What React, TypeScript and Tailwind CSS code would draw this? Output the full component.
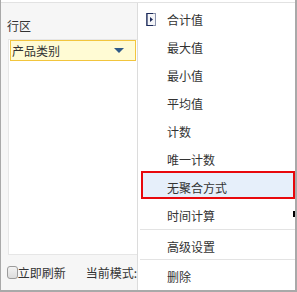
import React from "react";

const items = ["合计值", "最大值", "最小值", "平均值", "计数", "唯一计数", "无聚合方式", "时间计算"];

function Item({ label, active, children }: { label: string; active?: boolean; children?: React.ReactNode }) {
  return (
    <div
      className={
        "relative ml-[3px] h-[28px] flex items-center pt-[6px] pl-[24px] border-2 " +
        (active ? "border-[#e8080c] bg-[#e6effa]" : "border-transparent")
      }
    >
      {children}
      <span className="text-[12px] leading-[16px] text-[#333]">{label}</span>
    </div>
  );
}

export default function App() {
  return (
    <div
      className="w-[297px] h-[292px] flex flex-col border-l border-r-2 border-b-2 border-[#a9a9a9] bg-white overflow-hidden"
      style={{ fontFamily: '"Noto Sans CJK SC", "Noto Sans", sans-serif' }}
    >
      <div className="h-[3px] shrink-0 bg-white border-b border-[#e2e2e2]" />
      <div className="flex flex-1 min-h-0">
        {/* left panel */}
        <div className="w-[136px] shrink-0 bg-[#f6f6f6] overflow-hidden flex flex-col">
          <div className="mt-[15px] pl-[6px] text-[12px] leading-[16px] text-[#333]">行区</div>
          <div className="mt-[5px] ml-[7px] w-[140px] h-[216px] bg-white border border-[#e6e6e6]">
            <div className="ml-[1px] w-[126px] h-[21px] bg-[#fffbd4] border border-[#f2c53d] flex items-center justify-between">
              <span className="pl-[1px] text-[12px] leading-[16px] text-[#333]">产品类别</span>
              <svg width="10" height="5" viewBox="0 0 10 5" className="mr-[11px]">
                <polygon points="0,0 10,0 5,5" fill="#2f5a88" />
              </svg>
            </div>
          </div>
          <div className="mt-[9px] h-[17px] pl-[6px] flex items-center whitespace-nowrap">
            <div className="w-[13px] h-[13px] rounded-[3px] border border-[#9b9b9b] bg-gradient-to-b from-[#f3f3f3] to-[#dcdcdc]" />
            <span className="text-[12px] leading-[16px] text-[#333]">立即刷新</span>
            <span className="ml-[20px] text-[12px] leading-[16px] text-[#333]">当前模式:</span>
          </div>
        </div>
        {/* menu */}
        <div className="flex-1 border-l border-[#dcdcdc] bg-white flex flex-col">
          {items.map((l, i) => (
            <Item key={l} label={l} active={i === 6}>
              {i === 0 && (
                <svg width="10" height="13" viewBox="0 0 10 13" className="absolute left-[3px] top-[8px]">
                  <rect x="0.5" y="0.5" width="9" height="12" fill="#f4f5f8" stroke="#8b93ad" />
                  <path d="M0.5 0.5 H7 M0.5 12.5 H7 M1 0 V13" stroke="#1c2a5a" strokeWidth="1.2" fill="none" />
                  <polygon points="4,4 7,6.5 4,9" fill="#1c2a5a" />
                </svg>
              )}
              {i === 7 && <div className="absolute right-[-2px] top-[10px] w-[2px] h-[6px] bg-black" />}
            </Item>
          ))}
          <div className="ml-[2px] mt-[2px] h-[1px] bg-[#e3e3e3]" />
          <Item label="高级设置" />
          <div className="ml-[2px] mt-[1px] h-[1px] bg-[#e3e3e3]" />
          <Item label="删除" />
        </div>
      </div>
    </div>
  );
}
